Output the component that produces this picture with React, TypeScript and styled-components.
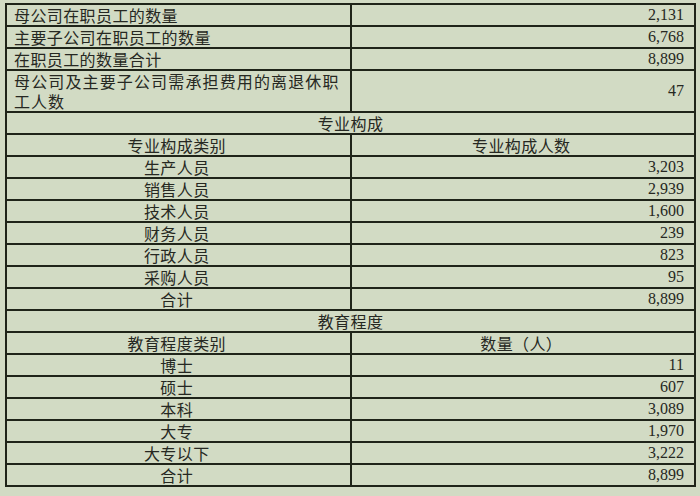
import React from "react";
import styled, { createGlobalStyle } from "styled-components";

const Global = createGlobalStyle`
  html, body {
    margin: 0;
    padding: 0;
    background: #d2dbc4;
  }
  body {
    font-family: "Liberation Serif", "Noto Sans CJK SC", serif;
    color: #262822;
  }
`;

const Page = styled.div`
  padding: 3px 0 0 5px;
  width: 700px;
  height: 496px;
  box-sizing: border-box;
`;

const Table = styled.table`
  width: 691px;
  border-collapse: collapse;
  table-layout: fixed;
  background: #d2dbc4;
  font-size: 16px;
`;

const Row = styled.tr``;

const Cell = styled.td<{ $align?: "left" | "center" | "right"; $tall?: boolean }>`
  border: 2px solid #1f2419;
  height: ${(p) => (p.$tall ? "40px" : "20px")};
  line-height: 20px;
  padding: 0 10px 0 7px;
  text-align: ${(p) => p.$align ?? "left"};
  vertical-align: middle;
  white-space: ${(p) => (p.$tall ? "normal" : "nowrap")};
  font-family: "Noto Sans CJK SC", "Liberation Serif", sans-serif;
  letter-spacing: 0.4px;
`;

const WrapText = styled.div`
  text-align: justify;
  text-justify: inter-character;
  letter-spacing: 1px;
`;

const Num = styled.td<{ $tall?: boolean }>`
  border: 2px solid #1f2419;
  height: ${(p) => (p.$tall ? "40px" : "20px")};
  line-height: 20px;
  padding: 0 10px 0 7px;
  text-align: right;
  vertical-align: middle;
  font-family: "Liberation Serif", serif;
  font-size: 16px;
`;

const Section = styled.td`
  border: 2px solid #1f2419;
  height: 20px;
  line-height: 20px;
  text-align: center;
  font-family: "Noto Sans CJK SC", sans-serif;
  letter-spacing: 0.4px;
  padding: 0;
`;

const top = [
  ["母公司在职员工的数量", "2,131"],
  ["主要子公司在职员工的数量", "6,768"],
  ["在职员工的数量合计", "8,899"],
];

const major = [
  ["生产人员", "3,203"],
  ["销售人员", "2,939"],
  ["技术人员", "1,600"],
  ["财务人员", "239"],
  ["行政人员", "823"],
  ["采购人员", "95"],
  ["合计", "8,899"],
];

const edu = [
  ["博士", "11"],
  ["硕士", "607"],
  ["本科", "3,089"],
  ["大专", "1,970"],
  ["大专以下", "3,222"],
  ["合计", "8,899"],
];

export default function App() {
  return (
    <>
      <Global />
      <Page>
        <Table>
          <colgroup>
            <col style={{ width: "50%" }} />
            <col style={{ width: "50%" }} />
          </colgroup>
          <tbody>
            {top.map(([k, v]) => (
              <Row key={k}>
                <Cell>{k}</Cell>
                <Num>{v}</Num>
              </Row>
            ))}
            <Row>
              <Cell $tall>
                <WrapText>母公司及主要子公司需承担费用的离退休职工人数</WrapText>
              </Cell>
              <Num $tall>47</Num>
            </Row>
            <Row>
              <Section colSpan={2}>专业构成</Section>
            </Row>
            <Row>
              <Cell $align="center">专业构成类别</Cell>
              <Cell $align="center">专业构成人数</Cell>
            </Row>
            {major.map(([k, v]) => (
              <Row key={k}>
                <Cell $align="center">{k}</Cell>
                <Num>{v}</Num>
              </Row>
            ))}
            <Row>
              <Section colSpan={2}>教育程度</Section>
            </Row>
            <Row>
              <Cell $align="center">教育程度类别</Cell>
              <Cell $align="center">数量（人）</Cell>
            </Row>
            {edu.map(([k, v], i) => (
              <Row key={k + i}>
                <Cell $align="center">{k}</Cell>
                <Num>{v}</Num>
              </Row>
            ))}
          </tbody>
        </Table>
      </Page>
    </>
  );
}
